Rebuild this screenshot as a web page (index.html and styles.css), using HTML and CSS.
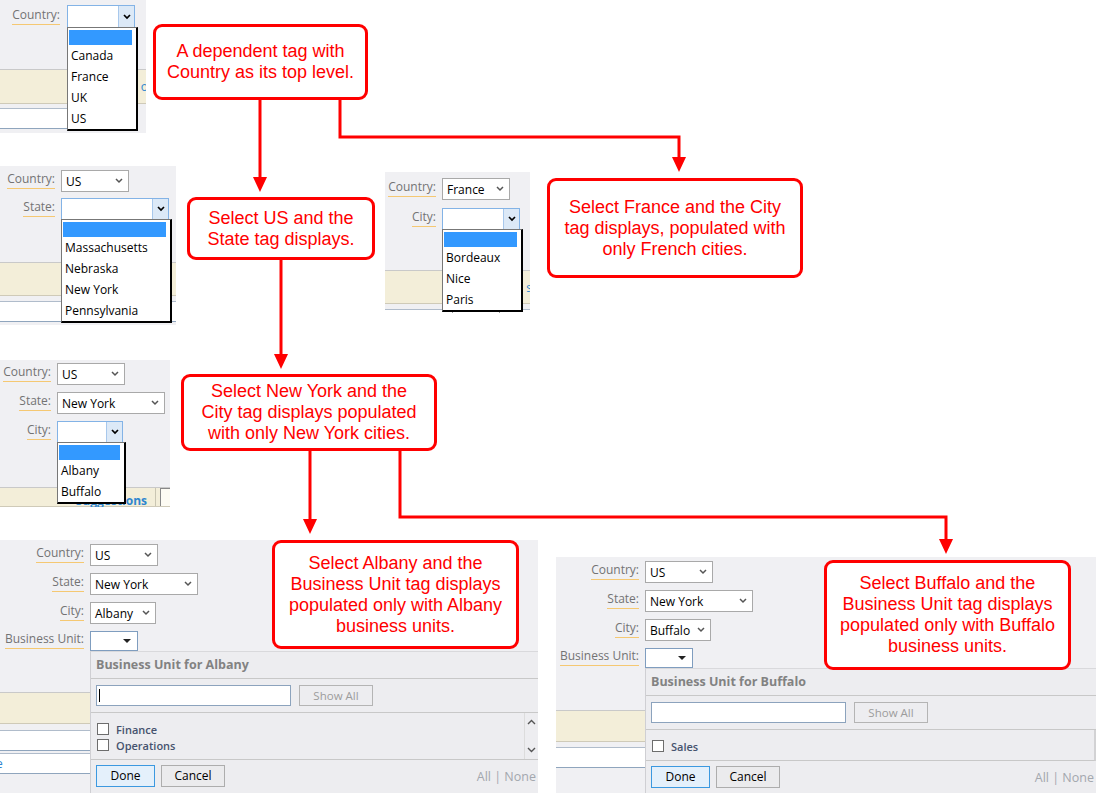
FILE: index.html
```html
<!DOCTYPE html>
<html lang="en">
<head>
    <meta charset="UTF-8">
    <meta name="viewport" content="width=device-width, initial-scale=1.0">
    <title>Dependent Tags</title>
    <link rel="stylesheet" href="styles.css">
</head>
<body>
<div class="canvas">

    <!-- 1. country list open -->
    <div class="shot p1">
        <div class="fields">
            <div class="row">
                <label class="label"><span>Country:</span></label>
                <div class="sel open w68">
                    <span class="btn"><svg width="8" height="6" viewBox="0 0 8 6"><path d="M1 1l3 3 3-3" fill="none" stroke="currentColor" stroke-width="1.7"/></svg></span>
                    <div class="list">
                        <div class="hi"></div>
                        <div>Canada</div>
                        <div>France</div>
                        <div>UK</div>
                        <div>US</div>
                    </div>
                </div>
            </div>
        </div>
        <div class="band"><span class="peek">o</span></div>
        <div class="strip short"></div>
    </div>

    <!-- 2. US picked, state list open -->
    <div class="shot p2">
        <div class="fields">
            <div class="row">
                <label class="label"><span>Country:</span></label>
                <div class="sel w68">US<span class="chev"><svg width="8" height="6" viewBox="0 0 8 6"><path d="M1 1l3 3 3-3" fill="none" stroke="currentColor" stroke-width="1.5"/></svg></span></div>
            </div>
            <div class="row">
                <label class="label"><span>State:</span></label>
                <div class="sel open w108">
                    <span class="btn"><svg width="8" height="6" viewBox="0 0 8 6"><path d="M1 1l3 3 3-3" fill="none" stroke="currentColor" stroke-width="1.7"/></svg></span>
                    <div class="list">
                        <div class="hi"></div>
                        <div>Massachusetts</div>
                        <div>Nebraska</div>
                        <div>New York</div>
                        <div>Pennsylvania</div>
                    </div>
                </div>
            </div>
        </div>
        <div class="band"></div>
        <div class="strip"></div>
    </div>

    <!-- 3. France picked, city list open -->
    <div class="shot p3">
        <div class="fields">
            <div class="row">
                <label class="label"><span>Country:</span></label>
                <div class="sel w68">France<span class="chev"><svg width="8" height="6" viewBox="0 0 8 6"><path d="M1 1l3 3 3-3" fill="none" stroke="currentColor" stroke-width="1.5"/></svg></span></div>
            </div>
            <div class="row">
                <label class="label"><span>City:</span></label>
                <div class="sel open w78">
                    <span class="btn"><svg width="8" height="6" viewBox="0 0 8 6"><path d="M1 1l3 3 3-3" fill="none" stroke="currentColor" stroke-width="1.7"/></svg></span>
                    <div class="list">
                        <div class="hi"></div>
                        <div>Bordeaux</div>
                        <div>Nice</div>
                        <div>Paris</div>
                    </div>
                </div>
            </div>
        </div>
        <div class="band"><span class="peek">s</span></div>
        <div class="strip cols"></div>
    </div>

    <!-- 4. New York picked, city list open -->
    <div class="shot p4">
        <div class="fields">
            <div class="row">
                <label class="label"><span>Country:</span></label>
                <div class="sel w68">US<span class="chev"><svg width="8" height="6" viewBox="0 0 8 6"><path d="M1 1l3 3 3-3" fill="none" stroke="currentColor" stroke-width="1.5"/></svg></span></div>
            </div>
            <div class="row">
                <label class="label"><span>State:</span></label>
                <div class="sel w108">New York<span class="chev"><svg width="8" height="6" viewBox="0 0 8 6"><path d="M1 1l3 3 3-3" fill="none" stroke="currentColor" stroke-width="1.5"/></svg></span></div>
            </div>
            <div class="row">
                <label class="label"><span>City:</span></label>
                <div class="sel open w66">
                    <span class="btn"><svg width="8" height="6" viewBox="0 0 8 6"><path d="M1 1l3 3 3-3" fill="none" stroke="currentColor" stroke-width="1.7"/></svg></span>
                    <div class="list">
                        <div class="hi"></div>
                        <div>Albany</div>
                        <div>Buffalo</div>
                    </div>
                </div>
            </div>
        </div>
        <div class="band tabs">
            <span class="tab">Suggestions</span>
            <span class="tab2"></span>
        </div>
    </div>

    <!-- 5. Albany picked, business unit picker -->
    <div class="shot p5">
        <div class="fields">
            <div class="row">
                <label class="label"><span>Country:</span></label>
                <div class="sel w68">US<span class="chev"><svg width="8" height="6" viewBox="0 0 8 6"><path d="M1 1l3 3 3-3" fill="none" stroke="currentColor" stroke-width="1.5"/></svg></span></div>
            </div>
            <div class="row">
                <label class="label"><span>State:</span></label>
                <div class="sel w108">New York<span class="chev"><svg width="8" height="6" viewBox="0 0 8 6"><path d="M1 1l3 3 3-3" fill="none" stroke="currentColor" stroke-width="1.5"/></svg></span></div>
            </div>
            <div class="row">
                <label class="label"><span>City:</span></label>
                <div class="sel w66">Albany<span class="chev"><svg width="8" height="6" viewBox="0 0 8 6"><path d="M1 1l3 3 3-3" fill="none" stroke="currentColor" stroke-width="1.5"/></svg></span></div>
            </div>
            <div class="row bu">
                <label class="label"><span>Business Unit:</span></label>
                <div class="sel tag w48"><span class="tri"></span></div>
            </div>
        </div>
        <div class="band"></div>
        <div class="strip"></div>
        <div class="strip"><span class="peek-left">e</span></div>

        <div class="popup">
            <div class="pop-head">Business Unit for Albany</div>
            <div class="pop-search">
                <div class="search"><span class="caret"></span></div>
                <div class="showall">Show All</div>
            </div>
            <div class="pop-list">
                <div class="items">
                    <div class="item"><span class="box"></span>Finance</div>
                    <div class="item"><span class="box"></span>Operations</div>
                </div>
                <div class="scroll">
                    <svg width="9" height="6" viewBox="0 0 9 6"><path d="M1 5l3.5-3.5L8 5" fill="none" stroke="#555" stroke-width="1.4"/></svg>
                    <svg width="9" height="6" viewBox="0 0 9 6"><path d="M1 1l3.5 3.5L8 1" fill="none" stroke="#555" stroke-width="1.4"/></svg>
                </div>
            </div>
            <div class="pop-foot">
                <div class="btn-done">Done</div>
                <div class="btn-cancel">Cancel</div>
                <div class="allnone">All | None</div>
            </div>
        </div>
    </div>

    <!-- 6. Buffalo picked, business unit picker -->
    <div class="shot p6">
        <div class="fields">
            <div class="row">
                <label class="label"><span>Country:</span></label>
                <div class="sel w68">US<span class="chev"><svg width="8" height="6" viewBox="0 0 8 6"><path d="M1 1l3 3 3-3" fill="none" stroke="currentColor" stroke-width="1.5"/></svg></span></div>
            </div>
            <div class="row">
                <label class="label"><span>State:</span></label>
                <div class="sel w108">New York<span class="chev"><svg width="8" height="6" viewBox="0 0 8 6"><path d="M1 1l3 3 3-3" fill="none" stroke="currentColor" stroke-width="1.5"/></svg></span></div>
            </div>
            <div class="row">
                <label class="label"><span>City:</span></label>
                <div class="sel w66">Buffalo<span class="chev"><svg width="8" height="6" viewBox="0 0 8 6"><path d="M1 1l3 3 3-3" fill="none" stroke="currentColor" stroke-width="1.5"/></svg></span></div>
            </div>
            <div class="row bu">
                <label class="label"><span>Business Unit:</span></label>
                <div class="sel tag w48"><span class="tri"></span></div>
            </div>
        </div>
        <div class="band"></div>
        <div class="strip"></div>

        <div class="popup">
            <div class="pop-head">Business Unit for Buffalo</div>
            <div class="pop-search">
                <div class="search"></div>
                <div class="showall">Show All</div>
            </div>
            <div class="pop-list edge">
                <div class="items">
                    <div class="item"><span class="box"></span>Sales</div>
                </div>
            </div>
            <div class="pop-foot">
                <div class="btn-done">Done</div>
                <div class="btn-cancel">Cancel</div>
                <div class="allnone">All | None</div>
            </div>
        </div>
    </div>

    <!-- callouts -->
    <div class="note n1">A dependent tag with<br>Country as its top level.</div>
    <div class="note n2">Select US and the<br>State tag displays.</div>
    <div class="note n3">Select France and the City<br>tag displays, populated with<br>only French cities.</div>
    <div class="note n4">Select New York and the<br>City tag displays populated<br>with only New York cities.</div>
    <div class="note n5">Select Albany and the<br>Business Unit tag displays<br>populated only with Albany<br>business units.</div>
    <div class="note n6">Select Buffalo and the<br>Business Unit tag displays<br>populated only with Buffalo<br>business units.</div>

    <svg class="arrows" width="1101" height="793" viewBox="0 0 1101 793">
        <g fill="none" stroke="#f00" stroke-width="3">
            <path d="M260 100V178"/>
            <path d="M340 100V137H679V158"/>
            <path d="M281 260V355"/>
            <path d="M310 451V520"/>
            <path d="M400 451V517H946V540"/>
        </g>
        <g fill="#f00">
            <polygon points="253,177 267,177 260,192"/>
            <polygon points="672,157 686,157 679,172"/>
            <polygon points="274,354 288,354 281,369"/>
            <polygon points="303,519 317,519 310,534"/>
            <polygon points="939,539 953,539 946,554"/>
        </g>
    </svg>
</div>
</body>
</html>
```

FILE: styles.css
```css
* { box-sizing: border-box; }
body {
    margin: 0;
    background-color: #fff;
    font-family: "Open Sans", "Noto Sans", sans-serif;
}
.canvas {
    position: relative;
    width: 1101px;
    height: 793px;
    overflow: hidden;
}

/* screenshot panels */
.shot {
    position: absolute;
    background-color: #f0f0f3;
    overflow: hidden;
    font-size: 12px;
    color: #000;
}
.p1 { left: 0; top: 0; width: 146px; height: 133px; }
.p2 { left: 0; top: 166px; width: 176px; height: 159px; }
.p3 { left: 385px; top: 172px; width: 145px; height: 141px; }
.p4 { left: 0; top: 360px; width: 170px; height: 147px; }
.p5 { left: 0; top: 540px; width: 538px; height: 253px; }
.p6 { left: 556px; top: 557px; width: 540px; height: 236px; }

.fields {
    display: flex;
    flex-direction: column;
    gap: 7px;
    padding-top: 4px;
}
.p1 .fields { height: 69px; padding-top: 5px; }
.p2 .fields { height: 96px; gap: 6px; }
.p3 .fields { height: 98px; gap: 8px; padding-top: 6px; }
.p4 .fields { height: 127px; padding-top: 3px; }
.p5 .fields { height: 152px; }
.p6 .fields { height: 153px; }

.row {
    display: flex;
    align-items: center;
    gap: 6px;
    height: 22px;
}
.p1 .row { gap: 7px; height: 23px; }
.row.bu { height: 20px; }
.label {
    text-align: right;
    flex-shrink: 0;
    padding-bottom: 5px;
}
.label span {
    color: #737373;
    border-bottom: 1px solid #f5c872;
    padding-bottom: 1px;
}
.p1 .label { width: 60px; }
.p2 .label { width: 55px; }
.p3 .label, .p4 .label { width: 51px; }
.p5 .label { width: 84px; }
.p6 .label { width: 83px; }

/* select boxes */
.sel {
    position: relative;
    height: 100%;
    background-color: #fff;
    border: 1px solid #a9a9a9;
    display: flex;
    align-items: center;
    padding-left: 4px;
}
.w48 { width: 48px; }
.w66 { width: 66px; }
.w68 { width: 68px; }
.w78 { width: 78px; }
.w108 { width: 108px; }
.chev {
    position: absolute;
    right: 5px;
    top: 7px;
    color: #555;
    line-height: 0;
}
.sel.open { border-color: #83b3e6; }
.sel.open .btn {
    position: absolute;
    right: 0;
    top: 0;
    bottom: 0;
    width: 16px;
    background-color: #dce9f7;
    border-left: 1px solid #a8c8ec;
    display: flex;
    align-items: center;
    justify-content: center;
    color: #000;
}
.sel.tag { border-color: #7f9dbf; }
.tri {
    position: absolute;
    right: 6px;
    top: 7px;
    border-left: 4px solid transparent;
    border-right: 4px solid transparent;
    border-top: 4px solid #222;
}
.list {
    position: absolute;
    top: 100%;
    left: -1px;
    width: calc(100% + 5px);
    background-color: #fff;
    border: 1px solid #777;
    border-right: 2px solid #000;
    border-bottom: 2px solid #000;
    padding: 2px 0 0 1px;
    z-index: 2;
}
.list div {
    height: 21px;
    line-height: 21px;
    padding-left: 2px;
    white-space: nowrap;
}
.list .hi {
    height: 15px;
    background-color: #3399ff;
    margin-right: 4px;
}

/* page behind the fields */
.band {
    height: 35px;
    background-color: #f3eed9;
    border-top: 1px solid #c9c9c9;
    border-bottom: 1px solid #cfcab8;
    display: flex;
    align-items: center;
    justify-content: flex-end;
}
.p2 .band { height: 34px; }
.p3 .band { height: 34px; }
.p5 .band, .p6 .band { height: 32px; }
.peek { color: #2f86cf; margin-right: -2px; }
.strip {
    height: 21px;
    margin-top: 5px;
    background-color: #fff;
    border-top: 1px solid #b0bccb;
    border-bottom: 1px solid #8fa5bd;
}
.strip.short { width: 112px; margin-top: 4px; }
.p5 .strip { margin-top: 2px; }
.p5 .band + .strip { margin-top: 6px; }
.strip.cols {
    background: linear-gradient(90deg, #fff 67px, #999 67px, #999 68px, #fff 68px, #fff 114px, #999 114px, #999 115px, #fff 115px);
}
.peek-left { color: #2f86cf; margin-left: -4px; line-height: 20px; }
.band.tabs {
    height: 20px;
    justify-content: flex-start;
    align-items: flex-start;
}
.tab {
    width: 156px;
    text-align: right;
    padding: 4px 8px 0 0;
    color: #2f86cf;
    font-weight: 700;
    border-right: 1px solid #c9c5b2;
    height: 100%;
}
.tab2 {
    width: 10px;
    height: 100%;
    margin-left: 4px;
    border-left: 1px solid #888;
    border-top: 1px solid #888;
    background-color: #fdfbf3;
}

/* business unit picker */
.popup {
    position: absolute;
    top: 111px;
    bottom: 0;
    right: 0;
    background-color: #ededf0;
    border-left: 1px solid #cfcfd3;
    border-top: 1px solid #d9d9dc;
}
.p5 .popup { left: 90px; }
.p6 .popup { left: 89px; }
.pop-head {
    height: 27px;
    line-height: 26px;
    padding-left: 5px;
    font-size: 12.5px;
    font-weight: 700;
    color: #828282;
    border-bottom: 1px solid #c8c8c8;
}
.pop-search {
    height: 34px;
    display: flex;
    align-items: center;
    gap: 8px;
    padding-left: 5px;
    border-bottom: 1px solid #c8c8c8;
}
.search {
    position: relative;
    width: 195px;
    height: 21px;
    background-color: #fff;
    border: 1px solid #8ca3bd;
}
.caret {
    position: absolute;
    left: 2px;
    top: 3px;
    width: 1px;
    height: 13px;
    background-color: #000;
}
.showall {
    width: 74px;
    height: 21px;
    border: 1px solid #b4b4b4;
    color: #9c9c9c;
    font-size: 11.5px;
    text-align: center;
    line-height: 19px;
}
.pop-list {
    display: flex;
    border-bottom: 1px solid #c8c8c8;
}
.pop-list.edge { border-right: 2px solid #d2d2d4; }
.items { flex: 1; padding: 8px 0 6px 6px; }
.item {
    height: 16px;
    display: flex;
    align-items: center;
    gap: 7px;
    font-size: 11px;
    font-weight: 600;
    color: #46536e;
}
.box {
    width: 12px;
    height: 12px;
    background-color: #fff;
    border: 1px solid #6d6d6d;
}
.scroll {
    width: 14px;
    border-left: 1px solid #dcdcdc;
    display: flex;
    flex-direction: column;
    justify-content: space-between;
    align-items: center;
    padding: 6px 0 6px;
}
.pop-foot {
    display: flex;
    align-items: center;
    gap: 6px;
    padding: 5px 2px 0 5px;
    font-size: 12px;
}
.btn-done, .btn-cancel {
    height: 22px;
    line-height: 20px;
    text-align: center;
}
.btn-done {
    width: 59px;
    background-color: #e4f0fb;
    border: 1px solid #3c99e0;
}
.btn-cancel {
    width: 64px;
    background-color: #ebebed;
    border: 1px solid #adadad;
}
.allnone {
    margin-left: auto;
    color: #a3a7ae;
    font-size: 12.5px;
}

/* red callouts */
.note {
    position: absolute;
    border: 3px solid #f00;
    border-radius: 9px;
    background-color: #fff;
    color: #f00;
    font: 18px/21px "Liberation Sans", Arial, sans-serif;
    text-align: center;
    display: flex;
    align-items: center;
    justify-content: center;
}
.n1 { left: 153px; top: 24px; width: 215px; height: 76px; }
.n2 { left: 187px; top: 197px; width: 188px; height: 63px; }
.n3 { left: 547px; top: 178px; width: 256px; height: 100px; }
.n4 { left: 181px; top: 374px; width: 256px; height: 77px; }
.n5 { left: 272px; top: 540px; width: 247px; height: 109px; }
.n6 { left: 824px; top: 560px; width: 247px; height: 110px; }

.arrows {
    position: absolute;
    left: 0;
    top: 0;
    pointer-events: none;
}
```
